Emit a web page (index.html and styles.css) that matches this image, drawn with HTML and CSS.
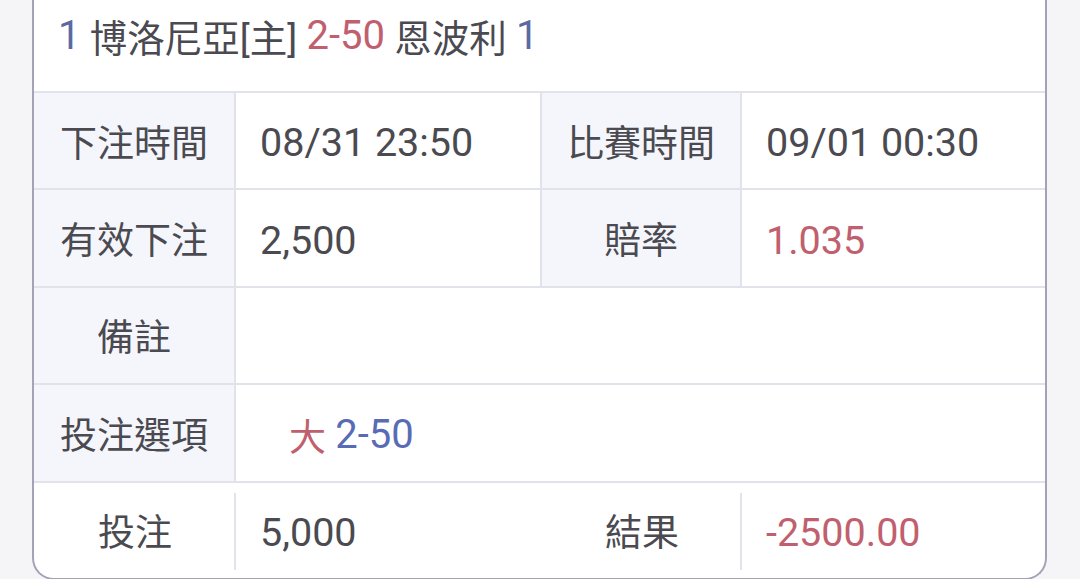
FILE: index.html
```html
<!DOCTYPE html>
<html lang="zh-Hant">
<head>
<meta charset="utf-8">
<link rel="stylesheet" href="styles.css">
</head>
<body>
<div class="card">
  <div class="head"><span class="blue num">1</span> 博洛尼亞[主] <span class="red num">2-50</span> 恩波利 <span class="blue num">1</span></div>
  <div class="grid">
    <div class="cell lbl">下注時間</div>
    <div class="cell val">08/31 23:50</div>
    <div class="cell lbl">比賽時間</div>
    <div class="cell val last">09/01 00:30</div>

    <div class="cell lbl">有效下注</div>
    <div class="cell val">2,500</div>
    <div class="cell lbl">賠率</div>
    <div class="cell val last red">1.035</div>

    <div class="cell lbl">備註</div>
    <div class="cell val span last"></div>

    <div class="cell lbl">投注選項</div>
    <div class="cell val span last opt"><span class="red">大</span>&nbsp;<span class="blue2 num">2-50</span></div>

    <div class="cell foot flbl">投注</div>
    <div class="cell foot fval">5,000</div>
    <div class="cell foot flbl">結果</div>
    <div class="cell foot fval red">-2500.00</div>
  </div>
</div>
</body>
</html>
```

FILE: styles.css
```css
html, body {
  margin: 0;
  padding: 0;
  background: #f5f5f7;
  height: 579px;
  overflow: hidden;
}
body {
  font-family: Roboto, "Noto Sans CJK TC", sans-serif;
  color: #4a4a50;
  font-size: 37px;
}
.card {
  margin: -30px 33px 0 32px;
  background: #fff;
  border: 2px solid #a3a3b8;
  border-top: none;
  border-radius: 0 0 22px 22px;
  overflow: hidden;
}
.head {
  height: 121px;
  box-sizing: border-box;
  padding: 30px 0 21px 24px;
  display: flex;
  align-items: center;
  white-space: pre;
  font-size: 37.5px;
}
.num { font-size: 40px; }
.blue { color: #5b6aa3; }
.blue2 { color: #5a6bb5; }
.red { color: #c0606e; }
.grid {
  display: grid;
  grid-template-columns: 202px 306px 200px 1fr;
  grid-auto-rows: 97.4px;
}
.cell {
  border-top: 2px solid #e2e2ea;
  border-right: 2px solid #e2e2ea;
  display: flex;
  align-items: center;
  box-sizing: border-box;
}
.cell.last { border-right: none; }
.lbl {
  background: #f5f6fb;
  justify-content: center;
}
.val, .fval {
  padding-left: 24px;
  padding-top: 4px;
  font-size: 39.5px;
}
.span { grid-column: span 3; }
.opt { padding-left: 53px; font-size: 37px; }
.foot {
  border-right: none;
  position: relative;
}
.flbl {
  justify-content: center;
}
.fval::before {
  content: "";
  position: absolute;
  left: -2px;
  top: 10px;
  bottom: 8px;
  width: 2px;
  background: #e2e2ea;
}
```
